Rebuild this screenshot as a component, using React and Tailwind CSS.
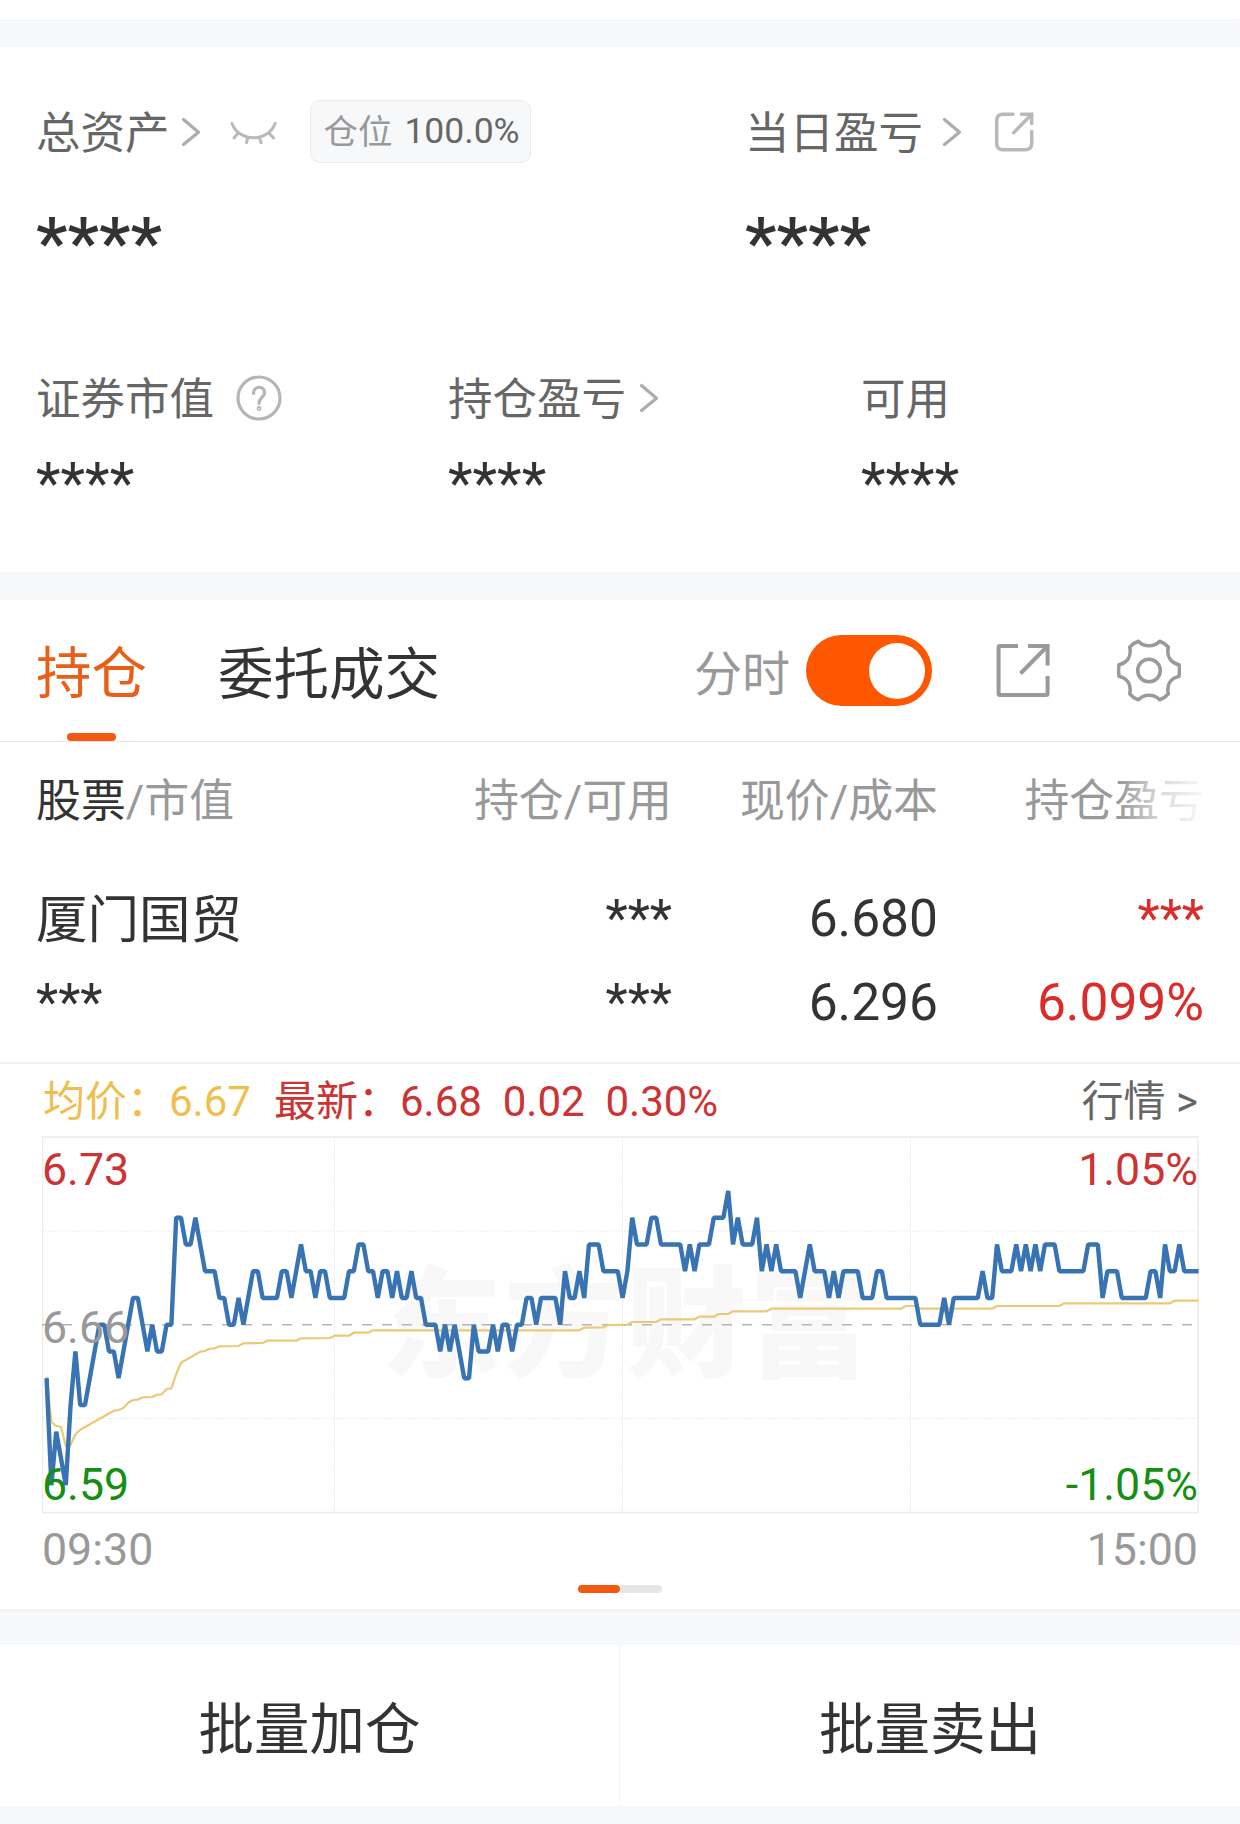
const PRICE_TICKS = [
  -2, -6, -4, -5, -6, -3, -1, -3, -3, -2, -1, 0, 0, -1, -1, -2, -1, 0, 1, 1,
  0, -1, 0, -1, -1, 0, 0, 4, 4, 3, 3, 4, 3, 2, 2, 2, 1, 1, 0, 0,
  1, 0, 1, 2, 2, 1, 1, 1, 1, 2, 2, 1, 2, 3, 2, 2, 1, 2, 2, 1,
  1, 1, 1, 2, 2, 3, 3, 2, 2, 1, 2, 2, 1, 2, 1, 1, 2, 1, 1, 0,
  0, 0, -1, 0, -1, 0, -1, -2, -2, 0, -1, -1, -1, 0, -1, 0, 0, -1, 0, 0,
  1, 1, 0, 1, 1, 1, 1, 0, 2, 1, 1, 2, 1, 3, 3, 3, 2, 2, 2, 2,
  1, 2, 4, 3, 3, 3, 4, 4, 3, 3, 3, 3, 3, 2, 3, 2, 3, 3, 3, 4,
  4, 4, 5, 3, 4, 3, 3, 3, 4, 2, 3, 2, 3, 2, 2, 2, 2, 1, 2, 3,
  2, 2, 2, 1, 2, 1, 2, 2, 2, 2, 1, 1, 1, 2, 2, 1, 1, 1, 1, 1,
  1, 1, 0, 0, 0, 0, 0, 1, 0, 1, 1, 1, 1, 1, 1, 2, 1, 1, 3, 2,
  2, 2, 3, 2, 3, 2, 3, 2, 3, 3, 3, 2, 2, 2, 2, 2, 2, 3, 3, 3,
  1, 2, 2, 2, 1, 1, 1, 1, 1, 1, 2, 2, 1, 3, 2, 2, 3, 2, 2, 2,
  2,
];

// [minute, y]
const AVERAGE = [
  [0, 240.7], [1, 285.7], [2, 290], [3, 291], [4, 310], [5, 309], [6, 298.3], [7, 293.7],
  [14, 274.7], [15, 274], [16, 272], [17, 266.7], [18, 264], [19, 263.7], [20, 261.3],
  [22, 261], [23, 258.7], [24, 258.3], [25, 253], [26, 252.3], [27, 238], [28, 226.7],
  [32, 215.7], [33, 215], [34, 212.7], [35, 212.3], [36, 210.3], [40, 210], [41, 207.3],
  [45, 207], [46, 204.7], [52, 204.7], [53, 202.3], [59, 202], [60, 199.7], [63, 199.7],
  [64, 196.7], [67, 196.7], [68, 194.3], [111, 194.3], [112, 191.7], [116, 191.3],
  [117, 189], [121, 188.7], [122, 186], [127, 186], [128, 183.3], [135, 183.3],
  [136, 180.7], [139, 180.7], [140, 178], [142, 178], [143, 175.3], [150, 175.3],
  [151, 172.7], [178, 172.7], [179, 170], [181, 170], [182, 172.7], [197, 172.7],
  [198, 170], [211, 170], [212, 167.3], [234, 167.3], [235, 164.7], [240, 164.7],
];

const minuteX = (i) => 4.6 + i * 4.8;
const tickY = (v) => 188.7 - v * 26.75;

function Chevron({ className = "" }) {
  return (
    <svg viewBox="0 0 20 30" className={`h-[30px] w-5 shrink-0 ${className}`} fill="none" stroke="#adadad" strokeWidth="3.2" strokeLinecap="round" strokeLinejoin="round">
      <path d="M2.5 2.5 17.5 15.2 2.5 27.5" />
    </svg>
  );
}

function ClosedEye({ className = "" }) {
  return (
    <svg viewBox="0 0 48 24" className={`h-6 w-12 shrink-0 ${className}`} fill="none" stroke="#b9b9b9" strokeWidth="3" strokeLinecap="round">
      <path d="M2 3.5C5 12 13 17.8 23.5 17.8S42 12 45 3.5M8.5 12.5 4 18M18 17.3 16.5 22.5M29.5 17.3 31 22.5M38.5 12.5 43.5 18" />
    </svg>
  );
}

function ShareSmall({ className = "" }) {
  return (
    <svg viewBox="0 0 40 40" className={`size-10 shrink-0 ${className}`} fill="none" stroke="#b9b9b9" strokeWidth="3.5" strokeLinecap="round">
      <path d="M19 2.2H9Q2.7 2.2 2.7 8.5V31.5Q2.7 37.7 9 37.7H31Q37.7 37.7 37.7 31.5V19.5M27.5 2.2H37.7V11.5M37.5 2.5 19.7 20.7" />
    </svg>
  );
}

function ShareLarge({ className = "" }) {
  return (
    <svg viewBox="0 0 56 56" className={`size-14 shrink-0 ${className}`} fill="none" stroke="#9a9a9a" strokeWidth="4">
      <path d="M23 3H5Q3.6 3 3.6 4.4V50.5Q3.6 52 5 52H51Q52.6 52 52.6 50.5V33M33 3H52.6V22.5M51.5 4.2 25.5 30.5" />
    </svg>
  );
}

function Gear({ className = "" }) {
  return (
    <svg viewBox="0 0 64 64" className={`size-16 shrink-0 ${className}`} fill="none" stroke="#9a9a9a" strokeWidth="3.6" strokeLinejoin="round">
      <path d="M42.7 2.2Q48 4 51.3 8.2C49.5 16.5 53 23.5 62 25.7Q63 31.5 62 37.3C53 39.5 49.5 46.5 51.3 54.8Q48 58.8 42.7 60.8C37 54.7 27 54.7 21.3 60.8Q16 58.8 12.7 54.8C14.5 46.5 11 39.5 2 37.3Q1 31.5 2 25.7C11 23.5 14.5 16.5 12.7 8.2Q16 4 21.3 2.2C27 8.3 37 8.3 42.7 2.2Z" />
      <circle cx="32" cy="31.5" r="11.3" />
    </svg>
  );
}

function Switch() {
  return (
    <div className="flex h-[71px] w-[126px] shrink-0 items-center justify-end rounded-full bg-[#ff5700] pr-[7px]">
      <div className="size-14 rounded-full bg-white" />
    </div>
  );
}

function Chart() {
  const price = PRICE_TICKS.map((v, i) => `${minuteX(i)},${tickY(v)}`).join(" ");
  const average = AVERAGE.map(([i, y]) => `${minuteX(i)},${y}`).join(" ");

  return (
    <div className="relative ml-[42px] h-[378px] w-[1157px]">
      <svg viewBox="0 0 1157 378" className="block h-full w-full" fill="none">
        <text x="339" y="232" fontSize="120" fontWeight="900" fill="#f8f8f8" textLength="488" fontFamily="'Noto Sans CJK SC', sans-serif">
          东方财富
        </text>
        <rect x="0.5" y="1" width="1155.5" height="375.5" stroke="#ececec" strokeWidth="1.5" />
        <path d="M0 95H1156M0 282.5H1156M292.5 1V376M580.5 1V376M868.5 1V376" stroke="#ededed" strokeDasharray="2 1" />
        <path d="M0 188.8H1156" stroke="#b5b5b5" strokeWidth="1.6" strokeDasharray="10 10" />
        <polyline points={average} stroke="#ecc977" strokeWidth="2.2" strokeLinejoin="round" />
        <polyline points={price} stroke="#3873b3" strokeWidth="4.4" strokeLinejoin="bevel" />
      </svg>
      <div className="absolute inset-0 flex flex-col justify-between pt-[7px] pr-px pb-[2px] text-[44.7px] leading-[54px]">
        <div className="flex justify-between">
          <span className="text-[#cc3333]">6.73</span>
          <span className="text-[#cc3333]">1.05%</span>
        </div>
        <span className="text-[#999]">6.66</span>
        <div className="flex justify-between">
          <span className="text-[#139013]">6.59</span>
          <span className="text-[#139013]">-1.05%</span>
        </div>
      </div>
    </div>
  );
}

export default function App() {
  return (
    <div className="h-[1824px] w-[1240px] overflow-hidden bg-white font-['Roboto','Noto_Sans_CJK_SC',sans-serif] text-[#333]">
      <div className="mt-[19px] h-7 bg-[#f7f8fa]" />

      <section className="h-[525px] px-9 pt-[53px]">
        <div className="flex h-[63px] items-center">
          <div className="flex w-[709px] items-center">
            <span className="pt-[5px] text-[44.5px] leading-none text-[#666]">总资产</span>
            <Chevron className="ml-[11px]" />
            <ClosedEye className="ml-[29px]" />
            <div className="ml-[32px] flex h-[63px] w-[221px] items-center justify-center gap-[12px] rounded-[10px] border-[1.5px] border-[#ebebeb] bg-[#f7f8fa] pl-[3px] whitespace-nowrap">
              <span className="pt-[2px] text-[34.5px] text-[#999]">仓位</span>
              <span className="text-[35.5px] text-[#666]">100.0%</span>
            </div>
          </div>
          <span className="pt-[5px] text-[44.5px] leading-none text-[#666]">当日盈亏</span>
          <Chevron className="ml-[19px]" />
          <ShareSmall className="ml-[32px]" />
        </div>
        <div className="mt-[38px] flex text-[71px] leading-[83px] font-medium">
          <span className="w-[709px]">****</span>
          <span>****</span>
        </div>

        <div className="mt-[84px] grid grid-cols-[412px_413px_1fr] text-[44.5px] leading-[60px] text-[#666]">
          <div className="flex h-[60px] items-center">
            <span className="pt-1">证券市值</span>
            <svg viewBox="0 0 46 46" className="ml-[22px] size-[46px]" fill="none" stroke="#b5b5b5" strokeWidth="3.2" strokeLinecap="round">
              <circle cx="23" cy="23" r="21" />
              <path d="M17.5 18.5C17.5 10 29 10.5 28.5 18 28.2 22.5 23 22.5 23 28.5" />
              <circle cx="23" cy="33.5" r=".8" />
            </svg>
          </div>
          <div className="flex h-[60px] items-center">
            <span className="pt-1">持仓盈亏</span>
            <Chevron className="ml-[13px]" />
          </div>
          <div className="flex h-[60px] items-center">
            <span className="pt-1">可用</span>
          </div>
        </div>
        <div className="mt-[23px] grid grid-cols-[412px_413px_1fr] text-[57px] leading-[66px]">
          <span>****</span>
          <span>****</span>
          <span>****</span>
        </div>
      </section>

      <div className="h-7 bg-[#f7f8fa]" />

      <div className="flex h-[142px] items-center border-b border-[#e6e6e6] pl-9">
        <div className="flex h-full w-[182px] flex-col justify-between">
          <span className="pt-[39px] text-[55.5px] leading-[72px] text-[#ea5f17]">持仓</span>
          <span className="ml-[31px] h-2 w-[49px] rounded-full bg-[#f5590f]" />
        </div>
        <span className="w-[476px] pt-[11px] text-[55.5px] leading-[72px]">委托成交</span>
        <span className="w-[112px] pt-[9px] text-[48px] leading-none text-[#999]">分时</span>
        <Switch />
        <ShareLarge className="ml-[63px]" />
        <Gear className="ml-[66px]" />
      </div>

      <div className="relative grid h-[116px] grid-cols-[320px_316px_266px_266px] items-center pt-[4px] pl-9 text-right text-[44.9px] text-[#999]">
        <span className="text-left">
          <span className="text-[#333]">股票</span>/市值
        </span>
        <span>持仓/可用</span>
        <span>现价/成本</span>
        <span>持仓盈亏</span>
        <div className="absolute top-0 right-[35px] h-full w-[86px] bg-linear-to-r from-white/0 via-white/65 to-white/95" />
      </div>

      <div className="grid h-[206px] grid-cols-[320px_316px_266px_266px] grid-rows-[84px_84px] border-b-2 border-[#f2f2f2] pt-[19px] pl-9 text-right text-[51.5px] leading-[84px]">
        <span className="text-left leading-[88px]">厦门国贸</span>
        <span>***</span>
        <span>6.680</span>
        <span className="text-[#db2c2c]">***</span>
        <span className="text-left">***</span>
        <span>***</span>
        <span>6.296</span>
        <span className="text-[#db2c2c]">6.099%</span>
      </div>

      <div className="flex h-[72px] items-center pt-[3px] pr-[42px] pl-[43px] text-[42px] whitespace-pre text-[#cc3333]">
        <span className="w-[231px] text-[#eebf4f]">均价：6.67</span>
        <span>最新：6.68  0.02  0.30%</span>
        <span className="ml-auto text-[#666]">行情 &gt;</span>
      </div>
      <Chart />
      <div className="flex h-[71px] items-center justify-between pt-[2px] pr-[42px] pl-[42px] text-[44.7px] text-[#999]">
        <span>09:30</span>
        <span>15:00</span>
      </div>
      <div className="flex h-6 justify-center">
        <span className="h-2 w-[42px] rounded-full bg-[#f5590f]" />
        <span className="h-2 w-[42px] rounded-r-full bg-[#e6e6e6]" />
      </div>

      <div className="h-9 border-t-2 border-[#f1f2f4] bg-[#f7f8fa]" />
      <div className="grid h-[161px] grid-cols-2 text-[55.5px] leading-none">
        <button className="flex items-center justify-center border-r border-[#f5f5f5] pt-[11px]">批量加仓</button>
        <button className="flex items-center justify-center pt-[11px]">批量卖出</button>
      </div>
      <div className="h-[18px] bg-[#f7f8fa]" />
    </div>
  );
}
